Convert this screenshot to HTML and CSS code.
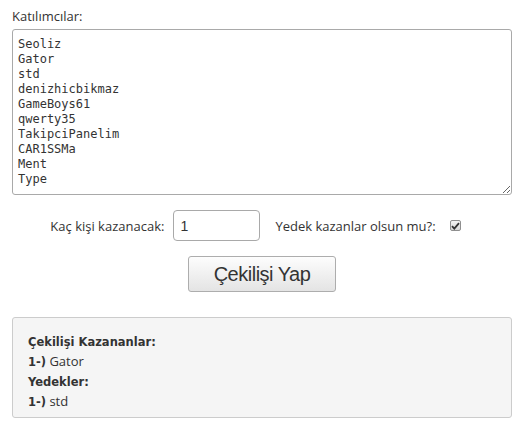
FILE: index.html
```html
<!DOCTYPE html>
<html lang="tr">
<head>
    <meta charset="UTF-8">
    <meta name="viewport" content="width=device-width, initial-scale=1.0">
    <title>Çekiliş</title>
    <link rel="stylesheet" href="styles.css">
</head>
<body>

<div class="draw-container">
    <label for="participants" class="field-label">Katılımcılar:</label>
    <textarea id="participants" name="participants">Seoliz
Gator
std
denizhicbikmaz
GameBoys61
qwerty35
TakipciPanelim
CAR1SSMa
Ment
Type</textarea>

    <div class="options-row">
        <label for="winner-count">Kaç kişi kazanacak:</label>
        <input type="text" id="winner-count" name="winner-count" value="1">
        <label for="backup" class="backup-label">Yedek kazanlar olsun mu?:</label>
        <span class="check-box">
            <svg width="9" height="8" viewBox="0 0 9 8"><path d="M1 4.2 L3.3 6.6 L8 1.2" fill="none" stroke="#333" stroke-width="1.8"/></svg>
        </span>
    </div>

    <div class="button-row">
        <button type="button" class="draw-button">Çekilişi Yap</button>
    </div>

    <div class="result-box">
        <b>Çekilişi Kazananlar:</b><br>
        <b>1-)</b> Gator<br>
        <b>Yedekler:</b><br>
        <b>1-)</b> std
    </div>
</div>

</body>
</html>
```

FILE: styles.css
```css
body {
    font-family: "Open Sans", sans-serif;
    font-size: 13px;
    color: #333;
    margin: 0;
    background-color: #fff;
}
.draw-container {
    width: 500px;
    padding: 8px 12px;
}
.field-label {
    display: block;
    line-height: 16px;
    margin-bottom: 5px;
}
textarea {
    display: block;
    box-sizing: border-box;
    width: 500px;
    height: 166px;
    padding: 7px 5px;
    font-family: "DejaVu Sans Mono", monospace;
    font-size: 12px;
    line-height: 15px;
    color: #333;
    border: 1px solid #a9a9a9;
    border-radius: 3px;
    margin: 0;
}
.options-row {
    display: flex;
    align-items: center;
    justify-content: center;
    margin-top: 15px;
    padding-right: 13px;
}
.options-row input {
    box-sizing: border-box;
    width: 87px;
    height: 31px;
    margin: 0 15px 0 9px;
    padding: 0 6px;
    font-family: "Liberation Sans", Arial, sans-serif;
    font-size: 14px;
    color: #333;
    border: 1px solid #a9a9a9;
    border-radius: 4px;
}
.check-box {
    display: inline-flex;
    align-items: center;
    justify-content: center;
    box-sizing: border-box;
    width: 11px;
    height: 11px;
    margin-left: 14px;
    border: 1px solid #8f8f8f;
    border-radius: 2px;
    background: linear-gradient(#f4f4f4, #d8d8d8);
}
.button-row {
    display: flex;
    justify-content: center;
    margin-top: 15px;
}
.draw-button {
    box-sizing: border-box;
    width: 148px;
    height: 36px;
    font-family: "Liberation Sans", Arial, sans-serif;
    font-size: 20px;
    letter-spacing: -0.5px;
    color: #333;
    border: 1px solid #adadad;
    border-radius: 3px;
    background: linear-gradient(#fdfdfd, #e4e4e4);
}
.result-box {
    box-sizing: border-box;
    width: 500px;
    margin-top: 25px;
    padding: 13px 15px 6px;
    background-color: #f5f5f5;
    border: 1px solid #ccc;
    border-radius: 3px;
    line-height: 20px;
}
.result-box b {
    font-family: "DejaVu Sans", sans-serif;
    font-size: 11.5px;
    line-height: 1;
}
```
